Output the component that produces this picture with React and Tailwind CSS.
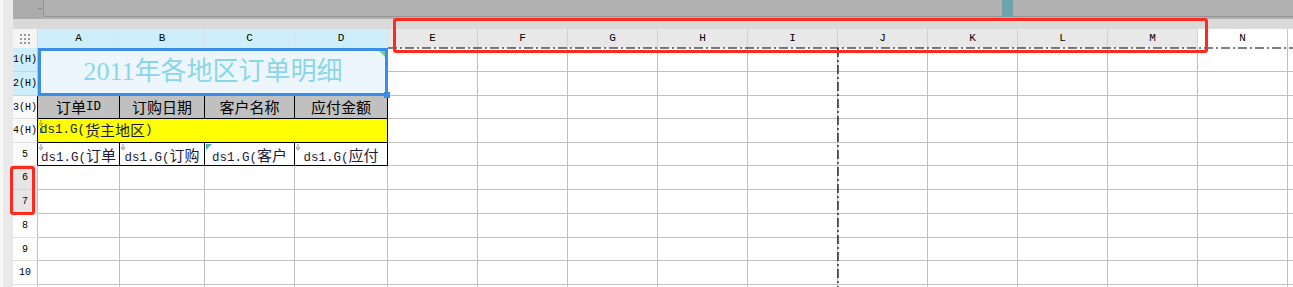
import React from "react";

const letters = ["A","B","C","D","E","F","G","H","I","J","K","L","M","N"];
const rowLabels = ["1(H)","2(H)","3(H)","4(H)","5","6","7","8","9","10"];

function RowHead({ label, idx }) {
  let cls = "flex items-center justify-center border-r border-b text-[10px] text-black font-['Liberation_Mono',monospace] ";
  if (idx === 0 || idx === 1) cls += "bg-[#cdeefa] border-b-[#b9dcea] border-r-[#c0c0c0]";
  else if (idx >= 2 && idx <= 4) cls += "bg-[#fafafa] border-b-[#dedede] border-r-black";
  else if (idx === 5 || idx === 6) cls += "bg-[#e6e6e6] border-b-[#d6d6d6] border-r-[#c0c0c0]";
  else cls += "bg-white border-b-[#e2e2e2] border-r-[#c0c0c0]";
  return <div className={cls}>{label}</div>;
}

function Blank() {
  return <div className="border-r border-b border-[#c0c0c0] bg-white" />;
}

function Last() {
  return <div className="border-b border-[#c0c0c0] bg-white" />;
}

function BlankRest() {
  return (
    <>
      {letters.slice(4).map((l) => (
        <Blank key={l} />
      ))}
      <Last />
    </>
  );
}

function Marker({ teal }) {
  return (
    <svg className="absolute left-[1px] top-[1px]" width="6" height="7" viewBox="0 0 6 7">
      {teal ? (
        <path d="M0 0 L6 0 L0 6 Z" fill="#3fb8a8" />
      ) : (
        <path d="M2 0 L2 4 M0 3 L2 6 L4 3" stroke="#8c8c8c" strokeWidth="1" fill="none" />
      )}
    </svg>
  );
}

function DataCell({ a, b, teal }) {
  return (
    <div className="relative border-r border-b border-black bg-white overflow-hidden">
      <Marker teal={teal} />
      <div className="px-[2px] pt-[2px] text-center text-[15px] leading-[19px] text-[#1c1c3a] font-['Noto_Sans_CJK_SC',sans-serif]">
        <span className="font-['Liberation_Mono',monospace] text-[12.5px]">ds1.G(</span>
        {a}
        <span className="font-['Liberation_Mono',monospace] text-[12.5px]">{b}</span>
      </div>
    </div>
  );
}

function HeadCell({ children }) {
  return (
    <div className="flex items-center justify-center border-r border-b border-black bg-[#c0c0c0] text-[15px] text-black font-['Noto_Sans_CJK_SC',sans-serif]">
      {children}
    </div>
  );
}

export default function App() {
  return (
    <div className="relative flex w-[1293px] h-[287px] overflow-hidden bg-white">
      {/* left strip */}
      <div className="w-[13px] shrink-0 bg-[#e9e9e9] border-l-[3px] border-[#f6f6f6]" />

      <div className="flex flex-1 flex-col">
        {/* top bar */}
        <div className="relative flex h-[19px] bg-[#b0b0b0]">
          <div className="relative w-[30px] bg-[#acacac]">
            <div className="absolute right-[1px] top-[8px] h-[1px] w-[4px] bg-[#8a8a8a]" />
          </div>
          <div className="flex-1 border-l border-b border-[#959595] mb-[2px] bg-[#b1b1b1]" />
          <div className="absolute left-[989px] top-0 h-[17px] w-[11px] bg-[#6fa2ad]" />
        </div>
        {/* band */}
        <div className="h-[10px] bg-[#d9d9d9]" />

        {/* sheet grid */}
        <div className="grid flex-1 grid-cols-[25px_82px_85px_90px_93px_repeat(10,90px)_1fr] grid-rows-[19px_24px_24px_23px_24px_23px_24px_24px_24px_23px_24px_1fr]">
          {/* column header row */}
          <div className="flex items-center justify-center border-r border-[#d6d6d6] bg-[#f4f4f4]">
            <svg width="10" height="10" viewBox="0 0 10 10">
              {[0, 4, 8].map((y) =>
                [0, 4, 8].map((x) => (
                  <rect key={x + "-" + y} x={x} y={y} width="2" height="2" fill="#9a9a9a" />
                ))
              )}
            </svg>
          </div>
          {letters.map((l, i) => (
            <div
              key={l}
              className={
                i < 4
                  ? "flex items-center justify-center border-r border-[#d8e6ec] bg-[#cdeefa] text-[11px] text-black font-['Liberation_Mono',monospace]"
                  : i < 13
                  ? "flex items-center justify-center border-r border-[#d2d2d2] bg-[#e8e8e8] text-[11px] text-black font-['Liberation_Mono',monospace]"
                  : "flex items-center justify-center border-r border-[#c8c8c8] bg-white text-[11px] text-black font-['Liberation_Mono',monospace]"
              }
            >
              {l}
            </div>
          ))}
          <div className="bg-white" />

          {/* row 1 */}
          <RowHead label={rowLabels[0]} idx={0} />
          <div className="relative col-span-4 row-span-2 flex items-center justify-center border-[3px] border-[#3b8ee8] bg-[#eef6fd]">
            <span className="text-[26px] leading-none text-[#8ad6e8] font-['Liberation_Serif','Noto_Sans_CJK_SC',serif]">
              2011年各地区订单明细
            </span>
            <svg className="absolute right-0 top-0" width="6" height="6" viewBox="0 0 6 6">
              <path d="M0 0 L6 0 L6 6 Z" fill="#7bd07b" />
            </svg>
            <div className="absolute right-[-5px] bottom-[-5px] h-[6px] w-[6px] bg-[#3b8ee8]" />
          </div>
          <BlankRest />

          {/* row 2 */}
          <RowHead label={rowLabels[1]} idx={1} />
          <BlankRest />

          {/* row 3 */}
          <RowHead label={rowLabels[2]} idx={2} />
          <HeadCell>
            订单<span className="font-['Liberation_Mono',monospace] text-[12.5px]">ID</span>
          </HeadCell>
          <HeadCell>订购日期</HeadCell>
          <HeadCell>客户名称</HeadCell>
          <HeadCell>应付金额</HeadCell>
          <BlankRest />

          {/* row 4 */}
          <RowHead label={rowLabels[3]} idx={3} />
          <div className="relative col-span-4 flex items-center border-r border-b border-black bg-[#ffff00] pl-[2px] text-[15px] text-[#1c1c3a] font-['Noto_Sans_CJK_SC',sans-serif]">
            <svg className="absolute left-[1px] top-[1px]" width="6" height="14" viewBox="0 0 6 14">
              <path d="M2 0 L2 4 M0 3 L2 6 L4 3" stroke="#8c8c8c" strokeWidth="1" fill="none" />
              <path d="M2 8 L2 13" stroke="#2f5fd0" strokeWidth="2" />
            </svg>
            <span className="font-['Liberation_Mono',monospace] text-[12.5px]">ds1.G(</span>
            货主地区
            <span className="font-['Liberation_Mono',monospace] text-[12.5px]">)</span>
          </div>
          <BlankRest />

          {/* row 5 */}
          <RowHead label={rowLabels[4]} idx={4} />
          <DataCell a="订单" b="ID)" />
          <DataCell a="订购日期" b=")" />
          <DataCell a="客户名称" b=")" teal />
          <DataCell a="应付金额" b=")" />
          <BlankRest />

          {/* rows 6-10 */}
          {[5, 6, 7, 8, 9].map((r) => (
            <React.Fragment key={r}>
              <RowHead label={rowLabels[r]} idx={r} />
              {letters.map((l) => (
                <Blank key={l} />
              ))}
              <Last />
            </React.Fragment>
          ))}

          {/* partial row 11 */}
          <div className="border-r border-[#c0c0c0] bg-white" />
          {letters.map((l) => (
            <div key={l} className="border-r border-[#c0c0c0] bg-white" />
          ))}
          <div className="bg-white" />
        </div>
      </div>

      {/* page-break dash-dot lines */}
      <svg className="absolute left-[388px] top-[47px]" width="905" height="2" viewBox="0 0 905 2">
        <line x1="0" y1="1" x2="905" y2="1" stroke="#000" strokeWidth="1.2" strokeDasharray="9 3 2 3" />
      </svg>
      <svg className="absolute left-[837px] top-[48px]" width="2" height="239" viewBox="0 0 2 239">
        <line x1="1" y1="0" x2="1" y2="239" stroke="#000" strokeWidth="1.2" strokeDasharray="9 3 2 3" />
      </svg>

      {/* red highlight boxes */}
      <div className="absolute left-[393px] top-[18px] h-[35px] w-[815px] rounded-[3px] border-[3px] border-[#ff2a1f]" />
      <div className="absolute left-[10px] top-[166px] h-[49px] w-[25px] rounded-[3px] border-[3px] border-[#ff2a1f]" />
    </div>
  );
}
